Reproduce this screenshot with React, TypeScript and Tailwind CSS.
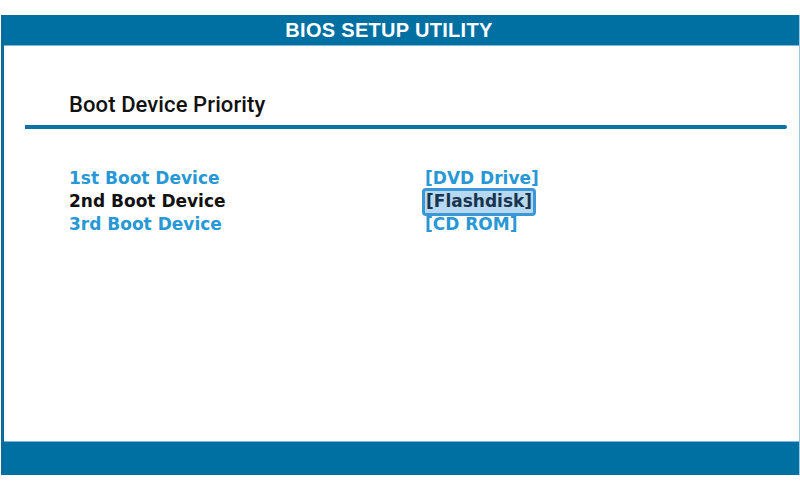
import React from "react"

const rows = [
  { label: "1st Boot Device", value: "[DVD Drive]", active: false },
  { label: "2nd Boot Device", value: "[Flashdisk]", active: true },
  { label: "3rd Boot Device", value: "[CD ROM]", active: false },
]

export default function App() {
  return (
    <div className="w-[800px] h-[500px] bg-white pt-[15px] pl-[1px]">
      <div className="w-[799px] h-[460px] flex flex-col border-l-[3px] border-[#0a6c9c] border-r border-r-[#9cc7df]">
        {/* top bar */}
        <div className="h-[31px] bg-[#0070a3] border-b border-[#7fb4d3] flex items-center justify-center pr-[25px]">
          <span className="text-white font-bold text-[20px] tracking-[0.3px] [font-family:'Liberation_Sans',Arial,sans-serif]">
            BIOS SETUP UTILITY
          </span>
        </div>

        {/* body */}
        <div className="flex-1 bg-white flex flex-col">
          <div className="pt-[46px] pl-[65px] h-[72px]">
            <h1 className="text-[22px] leading-[26px] font-medium text-[#111] tracking-[0.1px] [font-family:Roboto,'Liberation_Sans',sans-serif]">
              Boot Device Priority
            </h1>
          </div>
          <div className="ml-[21px] w-[762px] h-[4px] bg-[#0b71a6] rounded-r-full mt-[7px]" />

          <div className="mt-[38px] pl-[65px] flex flex-col [font-family:'DejaVu_Sans',Verdana,sans-serif]">
            {rows.map((r) => (
              <div key={r.label} className="flex items-center h-[23px]">
                <span
                  className={`w-[356px] text-[17px] font-bold ${r.active ? "text-[#111]" : "text-[#2798d5]"}`}
                >
                  {r.label}
                </span>
                {r.active ? (
                  <span className="-ml-[3px] px-[1px] h-[28px] flex items-center rounded-[4px] border-[3px] border-[#3d96d6] bg-[#b7d8f1] text-[17px] font-bold text-[#19344d]">
                    {r.value}
                  </span>
                ) : (
                  <span className="text-[17px] font-bold text-[#2798d5]">{r.value}</span>
                )}
              </div>
            ))}
          </div>
        </div>

        {/* bottom bar */}
        <div className="h-[34px] bg-[#0070a3] border-t border-[#7fb4d3]" />
      </div>
    </div>
  )
}
